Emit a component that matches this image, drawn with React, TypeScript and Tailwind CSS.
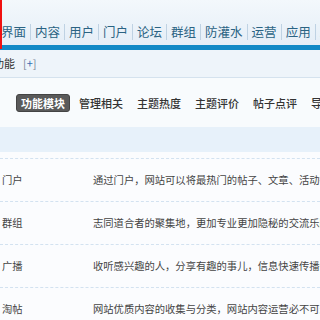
import React from 'react';

const topTabs = ['界面', '内容', '用户', '门户', '论坛', '群组', '防灌水', '运营', '应用', '工具'];
const subTabs = ['功能模块', '管理相关', '主题热度', '主题评价', '帖子点评', '导读设置'];

type Row = { name: string; desc: string };
const rows: Row[] = [
  { name: '门户', desc: '通过门户，网站可以将最热门的帖子、文章、活动等内容推荐给用户' },
  { name: '群组', desc: '志同道合者的聚集地，更加专业更加隐秘的交流乐园' },
  { name: '广播', desc: '收听感兴趣的人，分享有趣的事儿，信息快速传播的平台' },
  { name: '淘帖', desc: '网站优质内容的收集与分类，网站内容运营必不可少的工具' },
];

export default function App() {
  return (
    <div
      className="relative h-[320px] w-[320px] overflow-hidden bg-[#fbfcfe] text-[#333]"
      style={{ fontFamily: '"Noto Sans CJK SC", "Liberation Sans", sans-serif' }}
    >
      {/* top nav */}
      <div className="h-[45px] bg-gradient-to-b from-[#f3f8fc] to-[#e5eef7]">
        <ul className="ml-[-3px] flex items-center whitespace-nowrap pt-[24px]">
          {topTabs.map(t => (
            <li
              key={t}
              className="flex h-[16px] shrink-0 items-center border-r border-[#bfd2e3] px-1 text-[12.5px] leading-none text-[#2a6383]"
            >
              {t}
            </li>
          ))}
        </ul>
      </div>
      <div className="h-[5px] bg-[#1289c6]" />
      {/* red frame marker */}
      <div className="absolute left-0 top-0 h-[49px] w-[2px] bg-[#f01010]" />

      {/* current section */}
      <div className="flex h-[28px] items-center border-b border-[#d5e2ee] bg-[#eef4fa] pl-[-7px] text-[11px] whitespace-nowrap">
        <span className="ml-[-7px]">功能</span>
        <span className="ml-[8px] text-[#7a8899]">
          [<span className="text-[#3b6fb0]">+</span>]
        </span>
      </div>

      {/* sub tabs */}
      <div className="flex h-[49px] items-center gap-[4px] bg-[#f8fbfd] pl-[16px] whitespace-nowrap">
        {subTabs.map((t, i) => (
          <span
            key={t}
            className={
              i === 0
                ? 'shrink-0 rounded-[3px] border border-[#444] bg-[#5a5a5a] px-[4px] py-[1px] text-[11px] font-bold leading-[14px] text-white'
                : 'shrink-0 px-[5px] text-[11px] font-medium leading-[14px] text-[#333]'
            }
          >
            {t}
          </span>
        ))}
      </div>

      {/* header band */}
      <div className="h-[25px] bg-[#e7f1fa]" />

      {/* table rows */}
      <div className="border-t border-dashed border-[#d3e2f0] mt-[6px]">
        {rows.map(r => (
          <div
            key={r.name}
            className="flex h-[43px] items-center border-b border-dashed border-[#d3e2f0] whitespace-nowrap text-[10.3px] text-[#444]"
          >
            <span className="w-[93px] shrink-0 pl-[2px]">{r.name}</span>
            <span>{r.desc}</span>
          </div>
        ))}
      </div>
    </div>
  );
}
